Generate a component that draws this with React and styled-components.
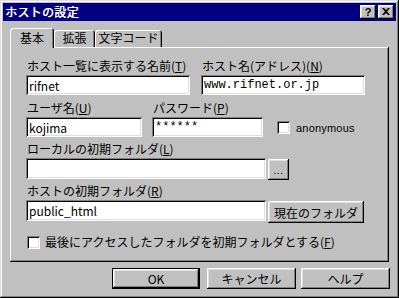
import React from "react";
import styled, { createGlobalStyle } from "styled-components";

const GlobalStyle = createGlobalStyle`
  html, body {
    margin: 0;
    padding: 0;
    background: #c0c0c0;
  }
  body {
    font-family: "Noto Sans CJK JP", "Liberation Sans", sans-serif;
    font-size: 12px;
    color: #000;
  }
`;

const Ventana = styled.div`
  box-sizing: border-box;
  width: 399px;
  height: 298px;
  padding: 3px;
  background: #c0c0c0;
  box-shadow: inset -1px -1px #000, inset 1px 1px #dfdfdf,
    inset -2px -2px #808080, inset 2px 2px #fff;
  display: flex;
  flex-direction: column;
`;

const BarraTitulo = styled.div`
  height: 18px;
  background: #000080;
  display: flex;
  align-items: center;
  justify-content: space-between;
  padding: 0 2px 0 2px;
`;

const Titulo = styled.span`
  color: #fff;
  font-size: 12px;
  line-height: 18px;
  letter-spacing: 0.3px;
  text-shadow: 0.4px 0 #fff;
`;

const BotonesTitulo = styled.div`
  display: flex;
  gap: 2px;
`;

const BotonTitulo = styled.div`
  width: 16px;
  height: 14px;
  box-sizing: border-box;
  background: #c0c0c0;
  box-shadow: inset -1px -1px #000, inset 1px 1px #fff,
    inset -2px -2px #808080, inset 2px 2px #dfdfdf;
  display: flex;
  align-items: center;
  justify-content: center;
  font-family: "Liberation Sans", sans-serif;
  font-weight: bold;
  font-size: 11px;
  line-height: 14px;
  padding-bottom: 1px;
`;

const Cuerpo = styled.div`
  padding: 7px 7px 0 7px;
  display: flex;
  flex-direction: column;
`;

const Pestanas = styled.div`
  display: flex;
  align-items: flex-end;
  height: 19px;
  position: relative;
  z-index: 1;
`;

const Pestana = styled.div`
  box-sizing: border-box;
  width: ${(p) => p.ancho}px;
  height: ${(p) => (p.activa ? 20 : 17)}px;
  margin-bottom: ${(p) => (p.activa ? -1 : 0)}px;
  background: #c0c0c0;
  border-radius: 3px 3px 0 0;
  box-shadow: inset 1px 1px #fff, inset -1px 0 #000, inset -2px 0 #808080;
  display: flex;
  justify-content: center;
  padding-top: ${(p) => (p.activa ? 3 : 1)}px;
  font-size: 12px;
  line-height: 14px;
`;

const Panel = styled.div`
  box-sizing: border-box;
  height: 215px;
  padding: 12px 16px 0 16px;
  box-shadow: inset -1px -1px #000, inset 1px 1px #fff, inset -2px -2px #808080;
  display: flex;
  flex-direction: column;
`;

const Fila = styled.div`
  display: flex;
  align-items: flex-end;
  margin-top: ${(p) => p.arriba || 0}px;
`;

const Campo = styled.div`
  display: flex;
  flex-direction: column;
  width: ${(p) => p.ancho}px;
  margin-left: ${(p) => p.izquierda || 0}px;
`;

const Etiqueta = styled.label`
  display: block;
  height: 16px;
  line-height: 14px;
  padding-left: 1px;
  white-space: nowrap;

  u {
    text-decoration: underline;
    text-underline-offset: 1px;
  }
`;

const Entrada = styled.div`
  box-sizing: border-box;
  width: ${(p) => p.ancho || "100%"};
  height: ${(p) => p.alto || 20}px;
  background: #fff;
  box-shadow: inset 1px 1px #808080, inset -1px -1px #fff,
    inset 2px 2px #000, inset -2px -2px #dfdfdf;
  padding: 0 3px;
  display: flex;
  align-items: center;
  font-family: ${(p) =>
    p.mono ? '"Liberation Mono", monospace' : '"Noto Sans CJK JP", sans-serif'};
  font-size: 12px;
  white-space: nowrap;
`;

const FilaEntrada = styled.div`
  display: flex;
  align-items: flex-start;
  gap: 2px;
`;

const Boton = styled.div`
  box-sizing: border-box;
  width: ${(p) => p.ancho}px;
  height: ${(p) => p.alto || 21}px;
  margin-top: ${(p) => p.arriba || 0}px;
  margin-right: ${(p) => p.derecha || 0}px;
  background: #c0c0c0;
  box-shadow: ${(p) =>
    p.defecto
      ? "inset 0 0 0 1px #000, inset -2px -2px #000, inset 2px 2px #fff, inset -3px -3px #808080, inset 3px 3px #dfdfdf"
      : "inset -1px -1px #000, inset 1px 1px #fff, inset -2px -2px #808080, inset 2px 2px #dfdfdf"};
  display: flex;
  align-items: center;
  justify-content: center;
  font-size: 12px;
  white-space: nowrap;
`;

const Puntos = styled.span`
  font-family: "Liberation Sans", sans-serif;
  font-size: 10px;
  letter-spacing: 0.5px;
  padding-top: 2px;
`;

const Casilla = styled.div`
  box-sizing: border-box;
  width: 13px;
  height: 13px;
  flex-shrink: 0;
  background: #fff;
  box-shadow: inset 1px 1px #808080, inset -1px -1px #fff,
    inset 2px 2px #000, inset -2px -2px #dfdfdf;
`;

const GrupoCasilla = styled.div`
  display: flex;
  align-items: center;
  gap: ${(p) => p.hueco}px;
  margin-left: ${(p) => p.izquierda || 0}px;
  margin-bottom: ${(p) => p.abajo || 0}px;
`;

const TextoChico = styled.span`
  font-family: "Liberation Sans", sans-serif;
  font-size: 11px;
  letter-spacing: 0.2px;
`;

const TextoCasilla = styled.span`
  font-size: 12px;
  line-height: 14px;

  u {
    text-underline-offset: 1px;
  }
`;

const FilaBotones = styled.div`
  display: flex;
  justify-content: flex-end;
  margin-top: 6px;
  padding-right: 6px;
`;

const Cerrar = () => (
  <svg width="8" height="7" viewBox="0 0 8 7">
    <path d="M0 0h2l2 2 2-2h2L5 3.5 8 7H6L4 5 2 7H0l3-3.5z" fill="#000" />
  </svg>
);

const App = () => {
  return (
    <>
      <GlobalStyle />
      <Ventana>
        <BarraTitulo>
          <Titulo>ホストの設定</Titulo>
          <BotonesTitulo>
            <BotonTitulo>?</BotonTitulo>
            <BotonTitulo>
              <Cerrar />
            </BotonTitulo>
          </BotonesTitulo>
        </BarraTitulo>

        <Cuerpo>
          <Pestanas>
            <Pestana activa ancho={44}>基本</Pestana>
            <Pestana ancho={41}>拡張</Pestana>
            <Pestana ancho={67}>文字コード</Pestana>
          </Pestanas>

          <Panel>
            <Fila>
              <Campo ancho={164}>
                <Etiqueta>ホスト一覧に表示する名前(<u>T</u>)</Etiqueta>
                <Entrada>rifnet</Entrada>
              </Campo>
              <Campo ancho={164} izquierda={11}>
                <Etiqueta>ホスト名(アドレス)(<u>N</u>)</Etiqueta>
                <Entrada mono>www.rifnet.or.jp</Entrada>
              </Campo>
            </Fila>

            <Fila arriba={6}>
              <Campo ancho={116}>
                <Etiqueta>ユーザ名(<u>U</u>)</Etiqueta>
                <Entrada>kojima</Entrada>
              </Campo>
              <Campo ancho={111} izquierda={10}>
                <Etiqueta>パスワード(<u>P</u>)</Etiqueta>
                <Entrada mono>******</Entrada>
              </Campo>
              <GrupoCasilla izquierda={14} abajo={3} hueco={6}>
                <Casilla />
                <TextoChico>anonymous</TextoChico>
              </GrupoCasilla>
            </Fila>

            <Fila arriba={5}>
              <Campo ancho={263}>
                <Etiqueta>ローカルの初期フォルダ(<u>L</u>)</Etiqueta>
                <FilaEntrada>
                  <Entrada ancho="240px" alto={21} />
                  <Boton ancho={21} arriba={1}>
                    <Puntos>...</Puntos>
                  </Boton>
                </FilaEntrada>
              </Campo>
            </Fila>

            <Fila arriba={4}>
              <Campo ancho={338}>
                <Etiqueta>ホストの初期フォルダ(<u>R</u>)</Etiqueta>
                <FilaEntrada>
                  <Entrada ancho="240px" alto={21}>public_html</Entrada>
                  <Boton ancho={96} alto={22} arriba={1}>
                    現在のフォルダ
                  </Boton>
                </FilaEntrada>
              </Campo>
            </Fila>

            <Fila arriba={12}>
              <GrupoCasilla izquierda={1} hueco={5}>
                <Casilla />
                <TextoCasilla>
                  最後にアクセスしたフォルダを初期フォルダとする(<u>F</u>)
                </TextoCasilla>
              </GrupoCasilla>
            </Fila>
          </Panel>
        </Cuerpo>

        <FilaBotones>
          <Boton defecto ancho={88} derecha={7}>
            OK
          </Boton>
          <Boton ancho={89} derecha={5}>
            キャンセル
          </Boton>
          <Boton ancho={89}>ヘルプ</Boton>
        </FilaBotones>
      </Ventana>
    </>
  );
};

export default App;
